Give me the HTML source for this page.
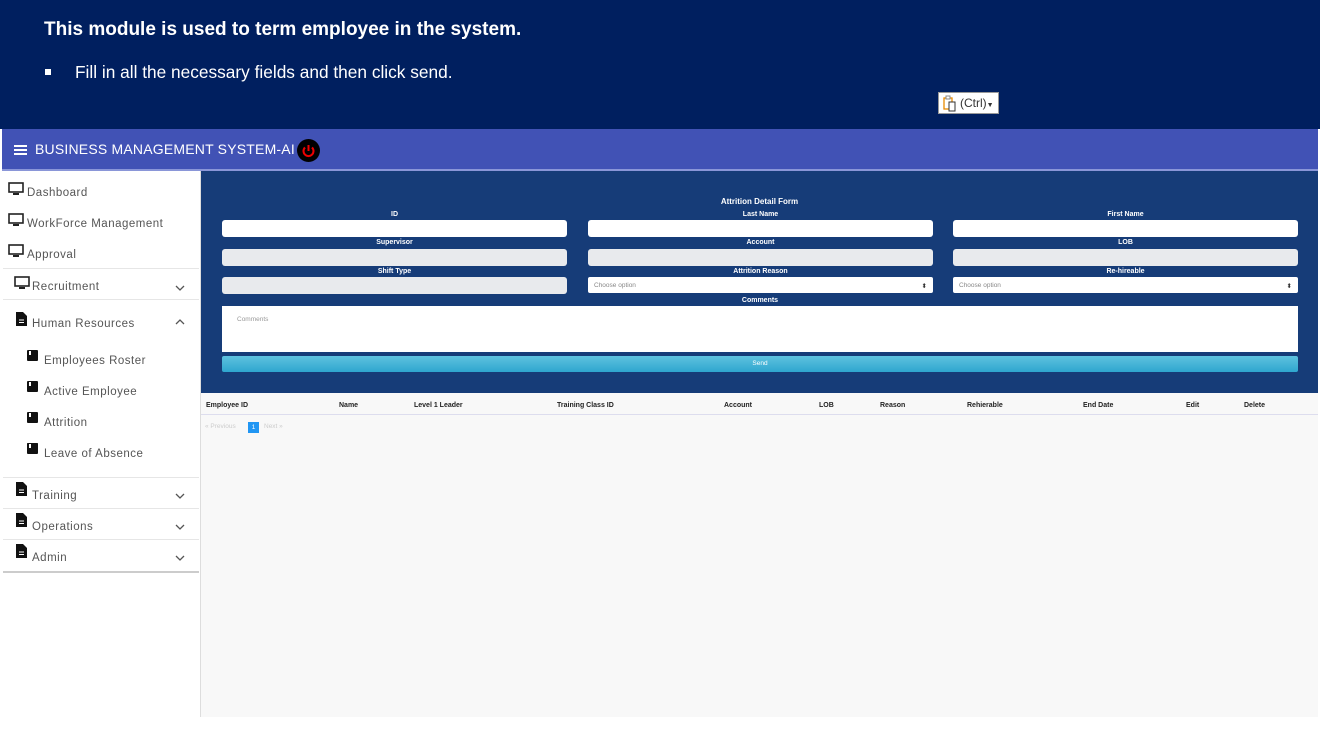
<!DOCTYPE html>
<html><head><style>
*{box-sizing:border-box;margin:0;padding:0}
body{width:1320px;height:742px;background:#fff;font-family:"Liberation Sans",sans-serif;position:relative;overflow:hidden}
.abs{position:absolute}
.top{left:0;top:0;width:1320px;height:129px;background:#001f5f}
.nav{left:2px;top:129px;width:1316px;height:42px;background:#4152b5;border-bottom:2px solid #8a96d8}
.side{left:1px;top:171px;width:200px;height:546px;background:#fff;border-right:1px solid #ddd}
.it{position:absolute;left:0;width:199px;font-size:11.5px;color:#555;letter-spacing:.5px}
.sep{position:absolute;left:2px;width:196px;height:1px;background:#e6e6e6}
.form{left:201px;top:171px;width:1117px;height:222px;background:#163c78}
.lbl{position:absolute;color:#fff;font-size:7px;font-weight:bold;text-align:center;width:345px}
.in{position:absolute;height:17px;width:345px;border-radius:3px;background:#fff}
.dis{background:#e8eaed}
.sel{font-size:6.5px;color:#888;padding:5px 6px}
.content{left:201px;top:393px;width:1117px;height:324px;background:#f8f8f8}
.chev{position:absolute;left:174px;width:10px;height:10px}
</style></head><body>
<div class="abs top"></div>
<div class="abs" style="left:44px;top:19px;color:#fff;font-size:19px;font-weight:bold">This module is used to term employee in the system.</div>
<div class="abs" style="left:45px;top:69px;width:6px;height:6px;background:#fff"></div>
<div class="abs" style="left:75px;top:62px;color:#fff;font-size:17.3px">Fill in all the necessary fields and then click send.</div>
<div class="abs" style="left:938px;top:92px;width:61px;height:22px;background:#fff;border:1px solid #999;font-size:12px;color:#333;padding:3px 0 0 21px">(Ctrl)<span style="font-size:7px">▼</span>
<svg class="abs" style="left:4px;top:2px" width="14" height="17"><rect x="1" y="3" width="8" height="11" fill="none" stroke="#e88a00" stroke-width="1.3"/><rect x="3" y="1" width="4" height="3" fill="#fff" stroke="#888"/><rect x="6" y="7" width="6" height="9" fill="#fff" stroke="#333"/></svg></div>
<div class="abs nav"></div>
<div class="abs" style="left:14px;top:145px;width:13px;height:2px;background:#fff;box-shadow:0 4px 0 #fff,0 8px 0 #fff"></div>
<div class="abs" style="left:35px;top:141px;color:#fff;font-size:14px;letter-spacing:.2px">BUSINESS MANAGEMENT SYSTEM-AI</div>
<div class="abs" style="left:297px;top:139px;width:23px;height:23px;border-radius:50%;background:#000"><svg width="23" height="23"><path d="M8 8.5a5 5 0 1 0 7 0" fill="none" stroke="#e00" stroke-width="2"/><line x1="11.5" y1="6" x2="11.5" y2="12" stroke="#e00" stroke-width="2"/></svg></div>
<div class="abs side">
<div class="it" style="top:16px;left:26px">Dashboard</div>
<div class="it" style="top:47px;left:26px">WorkForce Management</div>
<div class="it" style="top:78px;left:26px">Approval</div>
<div class="sep" style="top:97px"></div>
<div class="it" style="top:110px;left:31px">Recruitment</div><svg class="chev" style="top:112px"><path d="M1 3l4 4 4-4" fill="none" stroke="#555" stroke-width="1.3"/></svg>
<div class="sep" style="top:128px"></div>
<div class="it" style="top:147px;left:31px">Human Resources</div><svg class="chev" style="top:146px"><path d="M1 7l4-4 4 4" fill="none" stroke="#555" stroke-width="1.3"/></svg>
<div class="it" style="top:184px;left:43px">Employees Roster</div>
<div class="it" style="top:215px;left:43px">Active Employee</div>
<div class="it" style="top:246px;left:43px">Attrition</div>
<div class="it" style="top:277px;left:43px">Leave of Absence</div>
<div class="sep" style="top:306px"></div>
<div class="it" style="top:319px;left:31px">Training</div><svg class="chev" style="top:320px"><path d="M1 3l4 4 4-4" fill="none" stroke="#555" stroke-width="1.3"/></svg>
<div class="sep" style="top:337px"></div>
<div class="it" style="top:350px;left:31px">Operations</div><svg class="chev" style="top:351px"><path d="M1 3l4 4 4-4" fill="none" stroke="#555" stroke-width="1.3"/></svg>
<div class="sep" style="top:368px"></div>
<div class="it" style="top:381px;left:31px">Admin</div><svg class="chev" style="top:382px"><path d="M1 3l4 4 4-4" fill="none" stroke="#555" stroke-width="1.3"/></svg>
<div class="sep" style="top:400px;height:2px;background:#ccc"></div>
<svg class="abs" style="left:7px;top:11px" width="16" height="80"><g fill="none" stroke="#222" stroke-width="1.6"><rect x="1" y="1" width="14" height="9"/><rect x="1" y="32" width="14" height="9"/><rect x="1" y="63" width="14" height="9"/></g><g fill="#222"><rect x="5" y="11" width="6" height="2"/><rect x="5" y="42" width="6" height="2"/><rect x="5" y="73" width="6" height="2"/></g></svg>
<svg class="abs" style="left:13px;top:105px" width="16" height="14"><rect x="1" y="1" width="14" height="9" fill="none" stroke="#222" stroke-width="1.6"/><rect x="5" y="11" width="6" height="2" fill="#222"/></svg>
<svg class="abs" style="left:15px;top:141px" width="12" height="260"><g fill="#111"><path d="M0 0h7l4 4v10H0z"/><path d="M0 170h7l4 4v10H0z"/><path d="M0 201h7l4 4v10H0z"/><path d="M0 232h7l4 4v10H0z"/></g><g stroke="#fff" stroke-width="1"><path d="M3 8h5M3 10.5h5M3 178h5M3 180.5h5M3 209h5M3 211.5h5M3 240h5M3 242.5h5"/></g></svg>
<svg class="abs" style="left:26px;top:179px" width="12" height="100"><g fill="#111"><rect width="11" height="11" rx="1"/><rect y="31" width="11" height="11" rx="1"/><rect y="62" width="11" height="11" rx="1"/><rect y="93" width="11" height="7" rx="1"/></g><g fill="#fff"><rect x="2" y="1" width="2" height="4"/><rect x="2" y="32" width="2" height="4"/><rect x="2" y="63" width="2" height="4"/><rect x="2" y="94" width="2" height="4"/></g></svg>
<svg class="abs" style="left:26px;top:272px" width="12" height="12"><rect width="11" height="11" rx="1" fill="#111"/><rect x="2" y="1" width="2" height="4" fill="#fff"/></svg>
</div>
<div class="abs form">
<div class="abs" style="left:0;top:26px;width:1117px;text-align:center;color:#fff;font-size:8px;font-weight:bold">Attrition Detail Form</div>
<div class="lbl" style="left:21px;top:40px">ID</div><div class="lbl" style="left:387px;top:40px">Last Name</div><div class="lbl" style="left:752px;top:40px">First Name</div>
<div class="in" style="left:21px;top:49px"></div><div class="in" style="left:387px;top:49px"></div><div class="in" style="left:752px;top:49px"></div>
<div class="lbl" style="left:21px;top:68px">Supervisor</div><div class="lbl" style="left:387px;top:68px">Account</div><div class="lbl" style="left:752px;top:68px">LOB</div>
<div class="in dis" style="left:21px;top:78px"></div><div class="in dis" style="left:387px;top:78px"></div><div class="in dis" style="left:752px;top:78px"></div>
<div class="lbl" style="left:21px;top:97px">Shift Type</div><div class="lbl" style="left:387px;top:97px">Attrition Reason</div><div class="lbl" style="left:752px;top:97px">Re-hireable</div>
<div class="in dis" style="left:21px;top:106px"></div>
<div class="in sel" style="left:387px;top:106px;height:16px;border-radius:2px">Choose option<span style="float:right;color:#333">⬍</span></div>
<div class="in sel" style="left:752px;top:106px;height:16px;border-radius:2px">Choose option<span style="float:right;color:#333">⬍</span></div>
<div class="lbl" style="left:21px;top:126px;width:1076px">Comments</div>
<div class="abs" style="left:21px;top:135px;width:1076px;height:46px;background:#fff;font-size:6.5px;color:#999;padding:10px 15px">Comments</div>
<div class="abs" style="left:21px;top:185px;width:1076px;height:16px;background:linear-gradient(#5ec2df,#2ea6cf);color:#fff;font-size:6.5px;text-align:center;line-height:16px;border-radius:2px">Send</div>
</div>
<div class="abs content">
<div class="abs" style="left:0;top:2px;width:1117px;height:20px;border-bottom:1px solid #dde;font-size:7px;font-weight:bold;color:#222">
<span class="abs" style="left:5px;top:7px">Employee ID</span><span class="abs" style="left:138px;top:7px">Name</span><span class="abs" style="left:213px;top:7px">Level 1 Leader</span><span class="abs" style="left:356px;top:7px">Training Class ID</span><span class="abs" style="left:523px;top:7px">Account</span><span class="abs" style="left:618px;top:7px">LOB</span><span class="abs" style="left:679px;top:7px">Reason</span><span class="abs" style="left:766px;top:7px">Rehierable</span><span class="abs" style="left:882px;top:7px">End Date</span><span class="abs" style="left:985px;top:7px">Edit</span><span class="abs" style="left:1043px;top:7px">Delete</span></div>
<div class="abs" style="left:4px;top:30px;font-size:6.5px;color:#ccc">« Previous</div>
<div class="abs" style="left:47px;top:29px;width:11px;height:11px;background:#2196f3;color:#fff;font-size:6.5px;text-align:center;line-height:11px">1</div>
<div class="abs" style="left:63px;top:30px;font-size:6.5px;color:#ccc">Next »</div>
</div>
</body></html>
